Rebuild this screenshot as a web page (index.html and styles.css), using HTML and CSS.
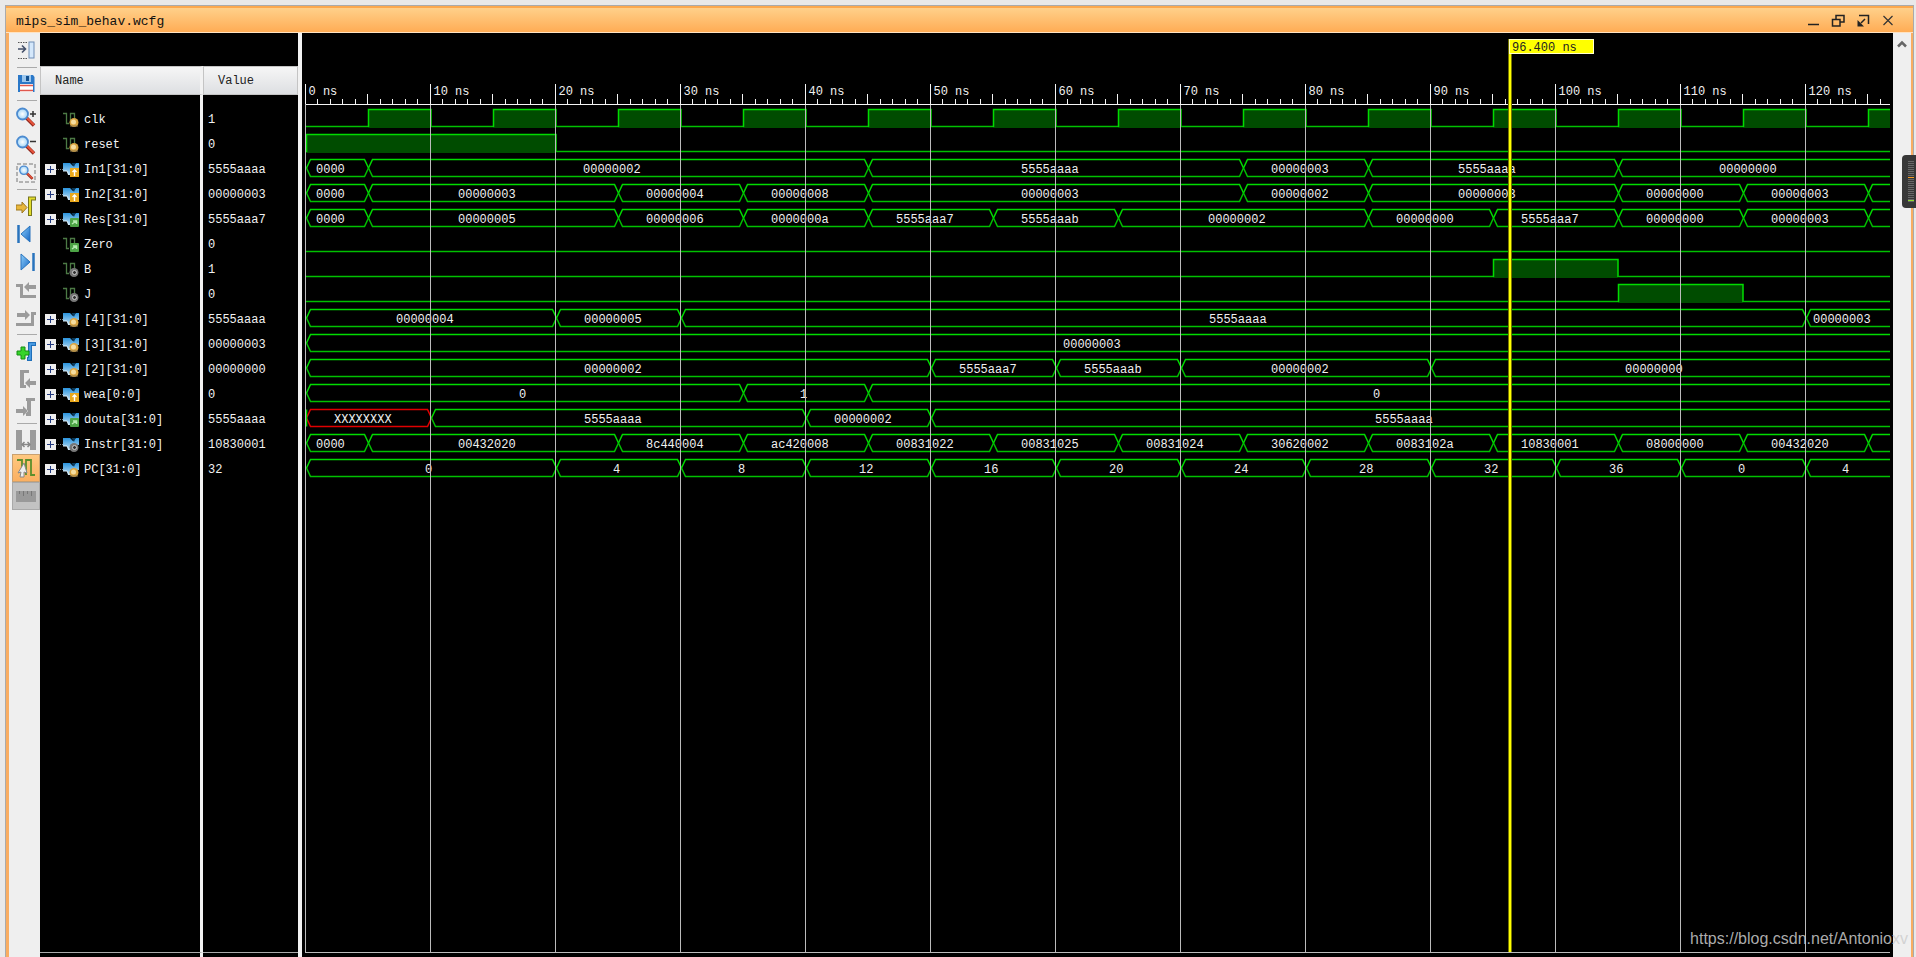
FILE: index.html
```html
<!DOCTYPE html>
<html lang="en">
<head>
<meta charset="utf-8">
<title>mips_sim_behav.wcfg</title>
<link rel="stylesheet" href="styles.css">
</head>
<body>
<svg class="defs" aria-hidden="true">
  <defs>
    <linearGradient id="blue" x1="0" y1="0" x2="1" y2="1"><stop offset="0" stop-color="#8fd0fb"/><stop offset="1" stop-color="#1465c4"/></linearGradient>
    <linearGradient id="bus" x1="0" y1="0" x2="0" y2="1"><stop offset="0" stop-color="#2a93dc"/><stop offset="1" stop-color="#c4e4f8"/></linearGradient>
    <radialGradient id="lens"><stop offset="0" stop-color="#fff"/><stop offset="1" stop-color="#9fd3f7"/></radialGradient>
    <symbol id="s-wire" viewBox="0 0 16 16"><path d="M0 1.500H3.500V11.500H6M7.500 11V1.500H11.500V6" fill="none" stroke="#4c7a45" stroke-width="1.300"/></symbol>
    <symbol id="s-bus" viewBox="0 0 16 16"><path d="M0 1H7L10 4L13 1H16V8H12L8 13H5L4 9H0Z" fill="url(#bus)"/><path d="M8.500 1L11 5L12.500 1" fill="#0a3a5c"/><path d="M0 9H4L6 13" stroke="#dceefa" fill="none"/></symbol>
    <symbol id="b-gold" viewBox="0 0 16 16"><circle cx="11" cy="10.500" r="4.500" fill="#d9a441"/><circle cx="10.500" cy="10" r="2.500" fill="#f5dda0"/><path d="M7 14H15" stroke="#8e7a50"/></symbol>
    <symbol id="b-in" viewBox="0 0 16 16"><rect x="7" y="6" width="9" height="9" fill="#eba91c"/><path d="M11.500 14V8M9.500 10L11.500 8L13.500 10" stroke="#fff" fill="none" stroke-width="1.400"/></symbol>
    <symbol id="b-out" viewBox="0 0 16 16"><rect x="7" y="6" width="9" height="9" rx="1" fill="#4da446"/><path d="M9 12L13 9M10 9H13.500V12" stroke="#b6ebb0" fill="none" stroke-width="1.500"/></symbol>
    <symbol id="b-grey" viewBox="0 0 16 16"><circle cx="11" cy="10.500" r="4.500" fill="#777"/><circle cx="11.500" cy="10.500" r="2" fill="#333" stroke="#ccc"/></symbol>
    <symbol id="glass" viewBox="0 0 20 20"><path d="M10 10.500L18 18.500" stroke="#8f251b" stroke-width="3.500"/><path d="M11 11L18 18" stroke="#e8553c" stroke-width="2"/><circle cx="6.500" cy="7" r="5.500" fill="url(#lens)" stroke="#4c8bd0" stroke-width="1.800"/></symbol>
  </defs>
</svg>

<main class="window">
  <header class="titlebar">
    <h1 class="title">mips_sim_behav.wcfg</h1>
    <div class="controls">
      <button class="control" aria-label="Minimize"><svg width="14" height="14"><path d="M2 10.500H13" stroke="#222" stroke-width="1.500"/></svg></button>
      <button class="control" aria-label="Float"><svg width="14" height="14" fill="none" stroke="#222" stroke-width="1.500"><path d="M5 5V1.500H13V8H9.500M1.500 5.500H9V12H1.500Z"/></svg></button>
      <button class="control" aria-label="Maximize"><svg width="14" height="14" fill="none" stroke="#222" stroke-width="1.500"><path d="M3 1.500H12.500V10M9 5L5 9"/><path d="M1.500 6V12.500H8Z" fill="#222" stroke="none"/></svg></button>
      <button class="control" aria-label="Close"><svg width="14" height="14" fill="none" stroke="#333" stroke-width="1.200"><path d="M2.500 2L11.500 11M11.500 2L2.500 11"/></svg></button>
    </div>
  </header>

  <div class="workspace">
    <nav class="toolbar" aria-label="Waveform tools">
      <button class="tool" aria-label="Dock"><svg viewBox="0 0 20 20" fill="none"><path d="M2 1.500H12M2 17.500H12" stroke="#555" stroke-dasharray="1.500 1"/><path d="M2 8H9M6 4.500L9.500 8L6 11.500" stroke="#44506a" stroke-width="1.600"/><rect x="13" y="1" width="5" height="16" fill="#d5e8fb" stroke="#6f8db5"/></svg></button>
      <hr class="rule">
      <button class="tool" aria-label="Save"><svg viewBox="0 0 20 20"><path d="M2 1H17L18.500 3V18H2Z" fill="#2a78c8"/><rect x="6" y="1" width="9" height="7" fill="#9cc7ed"/><rect x="10" y="2" width="3" height="5" fill="#12508f"/><rect x="4" y="10" width="13" height="8" fill="#fff"/><path d="M4 11.500H17M4 16.500H17" stroke="#e0584e" stroke-width="1.500"/></svg></button>
      <hr class="rule">
      <button class="tool" aria-label="Zoom in"><svg viewBox="0 0 20 20"><use href="#glass"/><path d="M14 7H20M17 4V10" stroke="#333" stroke-width="1.500"/></svg></button>
      <button class="tool" aria-label="Zoom out"><svg viewBox="0 0 20 20"><use href="#glass"/><path d="M14 6.500H20" stroke="#333" stroke-width="1.500"/></svg></button>
      <button class="tool" aria-label="Zoom fit"><svg viewBox="0 0 20 20"><rect x="1" y="1" width="18" height="18" fill="none" stroke="#777" stroke-dasharray="4 2"/><use href="#glass" x="3" y="2" width="15" height="15"/></svg></button>
      <hr class="rule">
      <button class="tool" aria-label="Go to cursor"><svg viewBox="0 0 20 20"><path d="M0 9H6V6L11 11.500L6 17V14H0Z" fill="#e8b73c" stroke="#9f7921"/><path d="M14 20V2.500H20" fill="none" stroke="#77751e" stroke-width="4"/><path d="M14 19V2.500H19" fill="none" stroke="#e2dc2b" stroke-width="2"/></svg></button>
      <button class="tool" aria-label="Previous transition"><svg viewBox="0 0 20 20"><path d="M2.500 1V19" stroke="#2873bd" stroke-width="2.500"/><path d="M14 2V18L5 10Z" fill="url(#blue)" stroke="#2873bd"/></svg></button>
      <button class="tool" aria-label="Next transition"><svg viewBox="0 0 20 20"><path d="M17.500 1V19" stroke="#2873bd" stroke-width="2.500"/><path d="M5 2V18L14 10Z" fill="url(#blue)" stroke="#2873bd"/></svg></button>
      <button class="tool" aria-label="Previous edge" disabled><svg viewBox="0 0 20 20" fill="#9b9b9b"><path d="M0 4H7V15H20V18H4V7H0ZM8 7L13 2V5H20V9H13V12Z"/></svg></button>
      <button class="tool" aria-label="Next edge" disabled><svg viewBox="0 0 20 20" fill="#9b9b9b"><path d="M20 4H15V15H0V18H18V7H20ZM14 7L9 2V5H1V9H9V12Z"/></svg></button>
      <hr class="rule">
      <button class="tool" aria-label="Add marker"><svg viewBox="0 0 20 20"><path d="M11 18H14V3H20" fill="none" stroke="#1f6fb9" stroke-width="4"/><path d="M12 18H14V3H19" fill="none" stroke="#54a6ec" stroke-width="1.500"/><path d="M5 6H9V10H13V14H9V18H5V14H1V10H5Z" fill="#37d42a" stroke="#168d13"/></svg></button>
      <button class="tool" aria-label="Previous marker" disabled><svg viewBox="0 0 20 20" fill="#9b9b9b"><path d="M4 1H13V4H8V16H10V19H4ZM9 14L14 9V12H20V16H14V19Z"/></svg></button>
      <button class="tool" aria-label="Next marker" disabled><svg viewBox="0 0 20 20" fill="#9b9b9b"><path d="M10 1H19V4H15V19H10V16H11V4H10ZM12 14L7 9V12H0V16H7V19Z"/></svg></button>
      <hr class="rule">
      <button class="tool" aria-label="Swap cursors" disabled><svg viewBox="0 0 20 20"><path d="M0 0H6V20H0ZM14 0H20V20H14Z" fill="#9b9b9b"/><path d="M6 14.500H14M8.500 12L6 14.500L8.500 17M11.500 12L14 14.500L11.500 17" stroke="#888" fill="none" stroke-width="1.500"/></svg></button>
      <button class="tool tool-active" aria-label="Snap to transition" aria-pressed="true"><svg viewBox="0 0 20 20"><path d="M1 2H6V9M10 17V2H15V17H19" fill="none" stroke="#5d8f2c" stroke-width="1.800"/><path d="M8 5L2 15L5 14L4 19L8 19L8 14L11 15Z" fill="#eee" stroke="#888"/></svg></button>
      <button class="tool tool-pressed" aria-label="Floating ruler" disabled><svg viewBox="0 0 20 20"><rect y="5" width="20" height="11" fill="#999"/><path d="M3.500 5V8M7.500 5V10M11.500 5V8M15.500 5V10" stroke="#777"/></svg></button>
    </nav>

    <section class="signals">
      <table class="signal-table">
        <thead><tr><th class="col-name" scope="col">Name</th><th scope="col">Value</th></tr></thead>
        <tbody id="signal-rows"></tbody>
      </table>
    </section>

    <section class="waves" id="waves" aria-label="Waveforms"></section>

    <div class="scroll"><svg width="12" height="10"><path d="M2 7.500L6 3.500L10 7.500" fill="none" stroke="#666" stroke-width="2.500"/></svg></div>
  </div>
</main>

<aside class="side-handle" aria-hidden="true"><svg width="8" height="42"><path d="M3 0V42" stroke="#686868" stroke-width="6" stroke-dasharray="1 1"/><path d="M0 16.500H6" stroke="#f59a23"/><path d="M0 39.500H6" stroke="#8fdc2c"/></svg></aside>
<a class="watermark" href="https://blog.csdn.net/Antonioxv">https://blog.csdn.net/Antonioxv</a>
<script src="waves.js"></script>
</body>
</html>
```

FILE: styles.css
```css
* { box-sizing: border-box; }

body {
  margin: 0;
  height: 100vh;
  padding: 5px 2px 0 5px;
  overflow: hidden;
  position: relative;
  background: #e9e9e9;
  font-family: "Liberation Mono", monospace;
  font-size: 12px;
}

.defs { position: absolute; width: 0; height: 0; }

.window {
  height: 100%;
  display: flex;
  flex-direction: column;
  border: 1px solid #aaa;
  border-bottom: 0;
  background: #f9ad62;
}

.titlebar {
  flex: none;
  height: 27px;
  padding: 2px 13px 0 10px;
  display: flex;
  align-items: center;
  justify-content: space-between;
  border-top: 2px solid #fca94f;
  border-bottom: 1px solid #ffe3c2;
  background: linear-gradient(#ffd08a, #ffac55);
}

.title { margin: 0; font-size: 13px; font-weight: normal; color: #111; }

.controls { display: flex; }

.control {
  width: 25px;
  height: 22px;
  padding: 0;
  border: 0;
  background: none;
  display: grid;
  place-items: center;
}

.workspace {
  flex: 1;
  min-height: 0;
  display: flex;
  margin: 0 2px 0 3px;
  background: #efefef;
}

.toolbar {
  flex: none;
  width: 31px;
  padding: 4px 0 0 3px;
  display: flex;
  flex-direction: column;
}

.tool {
  height: 28px;
  padding: 0;
  border: 1px solid transparent;
  background: none;
  display: grid;
  place-items: center;
}

.tool svg { width: 20px; height: 20px; }
.tool-active { border-color: #c9a070; background: linear-gradient(#ffc880, #fbb062); }
.tool-pressed { border-color: #a9a9a9; background: #c2c2c2; }

.rule {
  width: 20px;
  height: 1px;
  margin: 2px 4px 2px 5px;
  border: 0;
  background: #aaa;
}

.signals {
  flex: none;
  width: 258px;
  padding-top: 33px;
  background: #000;
}

.signal-table {
  width: 100%;
  height: 100%;
  table-layout: fixed;
  border-spacing: 0;
  color: #f2f2f2;
}

.signal-table th {
  height: 29px;
  padding: 0 0 0 14px;
  border: 1px solid #c4c4c4;
  background: linear-gradient(#f6f6f6, #dddfe2);
  color: #222;
  font-weight: normal;
  text-align: left;
}

.signal-table .col-name {
  width: 163px;
  border-right: 3px solid #f2f2f2;
}

.signal-table td { height: 25px; padding: 0 0 0 5px; }
.signal-table td:first-child { border-right: 3px solid #f2f2f2; }
.signal-table .gap td { height: 12px; }
.signal-table .filler td { height: auto; border-bottom: 1px solid #aaa; }
.signal-table .foot td { height: 4px; }

.signal { display: flex; align-items: center; height: 25px; }
.signal-icon { width: 16px; height: 16px; margin-right: 5px; }

.expand {
  width: 11px;
  height: 11px;
  padding: 0;
  border: 0;
  background: #eee;
  display: grid;
  place-items: center;
}

.branch { width: 7px; border-top: 1px dotted #888; }
.no-branch { width: 18px; }

.waves {
  flex: 1;
  min-width: 0;
  border-left: 4px solid #f2f2f2;
  background: #000;
  overflow: hidden;
}

.waves svg { display: block; }
.waves text { fill: #f0f0f0; white-space: pre; }
.waves .cursor-label { fill: #222; }
.fill { fill: #004c00; }
.hi { fill: none; stroke: #00dc00; stroke-width: 1.5; }
.lo { fill: none; stroke: #00c000; stroke-width: 1.5; }
.unknown { fill: none; stroke: #e00000; stroke-width: 1.5; }
.grid { stroke: #bbb; }
.axis { stroke: #f4f4f4; }

.scroll {
  flex: none;
  width: 18px;
  padding: 6px 0 0 3px;
}

.side-handle {
  position: absolute;
  top: 155px;
  right: 0;
  width: 14px;
  height: 53px;
  padding: 6px 0 0 6px;
  border-radius: 4px 0 0 4px;
  background: #373737;
}

.side-handle svg { display: block; }

.watermark {
  position: absolute;
  right: 8px;
  bottom: 9px;
  font: 16px/18px "Liberation Sans", Arial, sans-serif;
  color: rgba(205, 205, 205, 0.85);
  text-decoration: none;
}
```

FILE: waves.js
```javascript
const signals = [
  { name: "clk", value: "1", icon: "gold", high: Array.from({ length: 20 }, (_, i) => [5 + i * 10, 10 + i * 10]) },
  { name: "reset", value: "0", icon: "gold", high: [[0, 20]] },
  { name: "In1[31:0]", value: "5555aaaa", icon: "in", bus: [[0, "0000"], [5, "00000002"], [45, "5555aaaa"], [75, "00000003"], [85, "5555aaaa"], [105, "00000000"]] },
  { name: "In2[31:0]", value: "00000003", icon: "in", bus: [[0, "0000"], [5, "00000003"], [25, "00000004"], [35, "00000008"], [45, "00000003"], [75, "00000002"], [85, "00000003"], [105, "00000000"], [115, "00000003"], [125, ""]] },
  { name: "Res[31:0]", value: "5555aaa7", icon: "out", bus: [[0, "0000"], [5, "00000005"], [25, "00000006"], [35, "0000000a"], [45, "5555aaa7"], [55, "5555aaab"], [65, "00000002"], [85, "00000000"], [95, "5555aaa7"], [105, "00000000"], [115, "00000003"], [125, ""]] },
  { name: "Zero", value: "0", icon: "out", high: [] },
  { name: "B", value: "1", icon: "grey", high: [[95, 105]] },
  { name: "J", value: "0", icon: "grey", high: [[105, 115]] },
  { name: "[4][31:0]", value: "5555aaaa", icon: "gold", bus: [[0, "00000004"], [20, "00000005"], [30, "5555aaaa"], [120, "00000003"]] },
  { name: "[3][31:0]", value: "00000003", icon: "gold", bus: [[0, "00000003"]] },
  { name: "[2][31:0]", value: "00000000", icon: "gold", bus: [[0, "00000002"], [50, "5555aaa7"], [60, "5555aaab"], [70, "00000002"], [90, "00000000"]] },
  { name: "wea[0:0]", value: "0", icon: "in", bus: [[0, "0"], [35, "1"], [45, "0"]] },
  { name: "douta[31:0]", value: "5555aaaa", icon: "out", bus: [[0, "XXXXXXXX"], [10, "5555aaaa"], [40, "00000002"], [50, "5555aaaa"]] },
  { name: "Instr[31:0]", value: "10830001", icon: "grey", bus: [[0, "0000"], [5, "00432020"], [25, "8c440004"], [35, "ac420008"], [45, "00831022"], [55, "00831025"], [65, "00831024"], [75, "30620002"], [85, "0083102a"], [95, "10830001"], [105, "08000000"], [115, "00432020"], [125, ""]] },
  { name: "PC[31:0]", value: "32", icon: "gold", bus: [[0, "0"], [20, "4"], [30, "8"], [40, "12"], [50, "16"], [60, "20"], [70, "24"], [80, "28"], [90, "32"], [100, "36"], [110, "0"], [120, "4"]] }
];

const PX_PER_NS = 12.5;
const ORIGIN = 4;
const AXIS_Y = 71;
const FIRST_ROW = 76;
const ROW = 25;
const SWING = 18;
const CURSOR_NS = 96.4;

const timeX = ns => ORIGIN + Math.floor(ns * PX_PER_NS);

function renderRows() {
  const rows = signals.map(s => {
    const lead = s.bus
      ? `<button class="expand" aria-label="Expand ${s.name}"><svg width="9" height="9"><path d="M1 4.5H8M4.5 1V8" stroke="#223a80"/></svg></button><span class="branch"></span>`
      : `<span class="no-branch"></span>`;
    return `<tr><td><div class="signal">${lead}<svg class="signal-icon"><use href="#s-${s.bus ? "bus" : "wire"}"/><use href="#b-${s.icon}"/></svg>${s.name}</div></td><td>${s.value}</td></tr>`;
  });
  document.getElementById("signal-rows").innerHTML =
    `<tr class="gap"><td></td><td></td></tr>${rows.join("")}<tr class="filler"><td></td><td></td></tr><tr class="foot"><td></td><td></td></tr>`;
}

function drawLogic(s, y, end) {
  const low = y + SWING;
  let out = "";
  let x = ORIGIN;
  for (const [from, to] of s.high) {
    const a = timeX(from);
    if (a >= end) break;
    const b = Math.min(timeX(to), end);
    out += `<rect class="fill" x="${a}" y="${y}" width="${b - a}" height="${SWING + 1}"/>`;
    out += `<path class="lo" d="M${x} ${low - 0.5}H${a}"/>`;
    out += `<path class="hi" d="M${a + 0.5} ${low}V${y + 0.5}H${b}${b < end ? `V${low}` : ""}"/>`;
    x = b;
  }
  return out + `<path class="lo" d="M${x} ${low - 0.5}H${end}"/>`;
}

function drawBus(s, y, end) {
  const top = y + 0.5;
  const low = y + SWING - 0.5;
  const mid = y + SWING / 2;
  let out = "";
  s.bus.forEach(([from, label], i) => {
    const last = i === s.bus.length - 1;
    const a = timeX(from) + 0.5;
    const b = last ? end : timeX(s.bus[i + 1][0]) + 0.5;
    const bad = label.startsWith("X");
    const right = last ? end : b - 4;
    const tip = last ? "" : `L${b} ${mid}`;
    out += `<path class="${bad ? "unknown" : "hi"}" d="M${a} ${mid}L${a + 4} ${top}H${right}${tip}"/>`;
    out += `<path class="${bad ? "unknown" : "lo"}" d="M${a} ${mid}L${a + 4} ${low}H${right}${tip}"/>`;
    if (bad) out += `<path class="hi" d="M${a} ${top}V${low}"/>`;
    if (label) {
      const x = label.length === 4 ? a + 10 : (a + b) / 2 - 3 - label.length * 4 + (label.length < 3 ? 1 : 0);
      out += `<text x="${Math.floor(x)}" y="${y + 14}">${label}</text>`;
    }
  });
  return out;
}

function renderWaves() {
  const pane = document.getElementById("waves");
  pane.innerHTML = "";
  const width = pane.clientWidth;
  const height = pane.clientHeight;
  const end = width - 3;
  const bottom = height - 5;
  let out = "";
  signals.forEach((s, i) => {
    const y = FIRST_ROW + i * ROW;
    out += s.bus ? drawBus(s, y, end) : drawLogic(s, y, end);
  });
  for (let ns = 0; timeX(ns) < end; ns++) {
    const x = timeX(ns) - 0.5;
    if (ns % 10 === 0) {
      out += `<path class="grid" d="M${x} ${AXIS_Y}V${bottom}"/><path class="axis" d="M${x} 51V${AXIS_Y}"/>`;
      out += `<text x="${x + 3}" y="62">${ns} ns</text>`;
    } else {
      out += `<path class="axis" d="M${x} ${ns % 5 ? 66 : 61}V${AXIS_Y}"/>`;
    }
  }
  out += `<path class="axis" d="M${ORIGIN} ${AXIS_Y + 0.5}H${end}"/><path class="grid" d="M${ORIGIN - 1} ${bottom + 0.5}H${end}"/>`;
  const c = timeX(CURSOR_NS) - 1;
  out += `<path d="M${c} 6V${bottom}" stroke="#777700" stroke-width="4"/><path d="M${c} 6V${bottom}" stroke="#ffff00" stroke-width="2"/>`;
  out += `<rect x="${c - 0.5}" y="6.5" width="84" height="14" fill="#ffff00" stroke="#ffffd0"/><text class="cursor-label" x="${c + 2}" y="18">${CURSOR_NS.toFixed(3)} ns</text>`;
  pane.innerHTML = `<svg width="${width}" height="${height}">${out}</svg>`;
}

renderRows();
renderWaves();
window.addEventListener("resize", renderWaves);
```
